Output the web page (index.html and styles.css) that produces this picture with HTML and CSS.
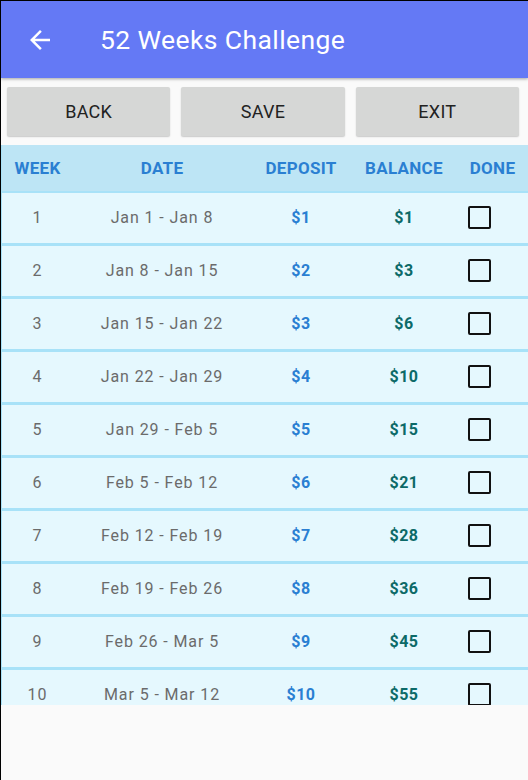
FILE: index.html
```html
<!DOCTYPE html>
<html>
<head>
<meta charset="utf-8">
<link rel="stylesheet" href="styles.css">
</head>
<body>
<div class="screen">
  <header class="appbar">
    <svg class="back" width="24" height="24" viewBox="0 0 24 24"><path d="M20 11H7.83l5.59-5.59L12 4l-8 8 8 8 1.41-1.41L7.83 13H20v-2z" fill="#fff"/></svg>
    <h1 class="title">52 Weeks Challenge</h1>
  </header>
  <div class="actions">
    <button class="btn">BACK</button>
    <button class="btn">SAVE</button>
    <button class="btn">EXIT</button>
  </div>
  <div class="table">
    <div class="row head">
      <div class="c week">WEEK</div>
      <div class="c date">DATE</div>
      <div class="c dep">DEPOSIT</div>
      <div class="c bal">BALANCE</div>
      <div class="c done">DONE</div>
    </div>
    <div class="row"><div class="c week">1</div><div class="c date">Jan 1 - Jan 8</div><div class="c dep">$1</div><div class="c bal">$1</div><div class="c chk"><span class="box"></span></div></div>
    <div class="row"><div class="c week">2</div><div class="c date">Jan 8 - Jan 15</div><div class="c dep">$2</div><div class="c bal">$3</div><div class="c chk"><span class="box"></span></div></div>
    <div class="row"><div class="c week">3</div><div class="c date">Jan 15 - Jan 22</div><div class="c dep">$3</div><div class="c bal">$6</div><div class="c chk"><span class="box"></span></div></div>
    <div class="row"><div class="c week">4</div><div class="c date">Jan 22 - Jan 29</div><div class="c dep">$4</div><div class="c bal">$10</div><div class="c chk"><span class="box"></span></div></div>
    <div class="row"><div class="c week">5</div><div class="c date">Jan 29 - Feb 5</div><div class="c dep">$5</div><div class="c bal">$15</div><div class="c chk"><span class="box"></span></div></div>
    <div class="row"><div class="c week">6</div><div class="c date">Feb 5 - Feb 12</div><div class="c dep">$6</div><div class="c bal">$21</div><div class="c chk"><span class="box"></span></div></div>
    <div class="row"><div class="c week">7</div><div class="c date">Feb 12 - Feb 19</div><div class="c dep">$7</div><div class="c bal">$28</div><div class="c chk"><span class="box"></span></div></div>
    <div class="row"><div class="c week">8</div><div class="c date">Feb 19 - Feb 26</div><div class="c dep">$8</div><div class="c bal">$36</div><div class="c chk"><span class="box"></span></div></div>
    <div class="row"><div class="c week">9</div><div class="c date">Feb 26 - Mar 5</div><div class="c dep">$9</div><div class="c bal">$45</div><div class="c chk"><span class="box"></span></div></div>
    <div class="row"><div class="c week">10</div><div class="c date">Mar 5 - Mar 12</div><div class="c dep">$10</div><div class="c bal">$55</div><div class="c chk"><span class="box"></span></div></div>
  </div>
</div>
</body>
</html>
```
FILE: styles.css
```css
* { box-sizing: border-box; }
html, body { margin: 0; padding: 0; }
body {
  width: 528px;
  height: 780px;
  background: #000;
  font-family: Roboto, "Liberation Sans", sans-serif;
  overflow: hidden;
}
.screen {
  margin: 1px 0 0 1px;
  height: 779px;
  background: #fafafa;
  display: flex;
  flex-direction: column;
}
.appbar {
  height: 77px;
  flex: none;
  background: #6479f5;
  display: flex;
  align-items: center;
  padding-left: 24px;
  box-shadow: 0 1px 3px rgba(0,0,0,0.35);
  position: relative;
  z-index: 1;
}
.back { width: 30px; height: 30px; }
.title {
  margin: 0 0 0 45px;
  color: #fff;
  font-weight: 400;
  font-size: 26.5px;
  letter-spacing: 0.4px;
}
.actions {
  display: flex;
  gap: 11px;
  padding: 9px 9px 9px 6px;
  flex: none;
}
.btn {
  flex: 1;
  height: 49px;
  border: none;
  border-radius: 2px;
  background: #d6d7d6;
  box-shadow: 0 1px 1.5px rgba(0,0,0,0.2);
  font-family: Roboto, "Liberation Sans", sans-serif;
  font-size: 18px;
  letter-spacing: 0.3px;
  color: #222;
  padding: 0;
}
.table {
  height: 560px;
  overflow: hidden;
  background: #e5f8fe;
  border-left: 1px solid #a8e2f8;
}
.row {
  display: grid;
  grid-template-columns: 71px 178px 100px 106px 1fr;
  height: 53px;
  align-items: center;
  border-bottom: 3px solid #a8e2f8;
  padding-bottom: 1px;
}
.row.head {
  background: #bde5f5;
  height: 48px;
  border-bottom: 2px solid #a8e2f8;
}
.c { text-align: center; font-size: 16px; letter-spacing: 0.9px; }
.head .c { color: #2a7fd2; font-weight: 700; font-size: 17px; letter-spacing: 0.3px; }
.week { color: #6b6b6b; }
.date { color: #6b6b6b; }
.dep { color: #2a7fd2; font-weight: 700; letter-spacing: 0.5px; }
.bal { color: #0c6a68; font-weight: 700; letter-spacing: 0.5px; }
.chk { text-align: left; padding-left: 11px; display: flex; }
.box {
  width: 23px;
  height: 23px;
  border: 2.5px solid #111;
  border-radius: 2px;
  display: block;
}
```
